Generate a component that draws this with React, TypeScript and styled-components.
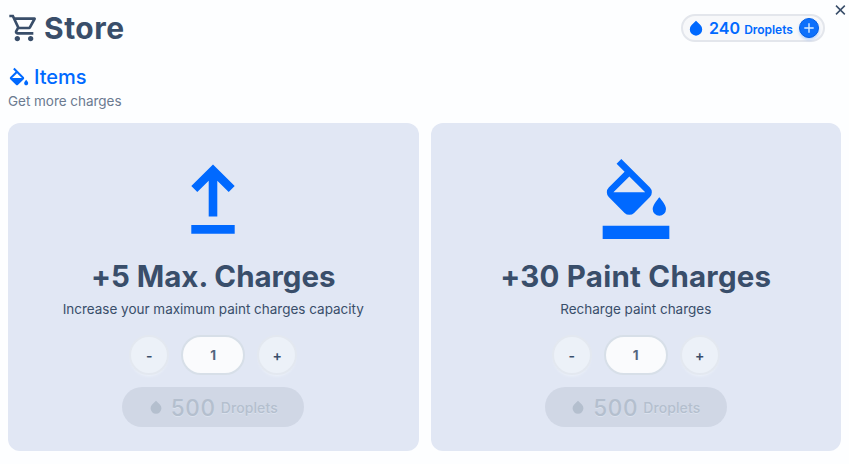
import React from "react";
import styled, { createGlobalStyle } from "styled-components";

const Global = createGlobalStyle`
  * { box-sizing: border-box; }
  body { margin: 0; background: #fdfeff; color: #394e6a; font-family: Inter, "Liberation Sans", sans-serif; }
  button, input { font-family: inherit; }
  svg { display: block; flex: none; }
`;

const Page = styled.main`
  position: relative;
  height: 464px;
  padding: 8px 8px 0;
  overflow: hidden;
`;
const Close = styled.button`
  position: absolute;
  top: 4px;
  right: 2px;
  padding: 0;
  border: 0;
  background: none;
  color: #394e6a;
`;
const Header = styled.header`
  display: flex;
  align-items: center;
  height: 40px;
  padding-right: 16px;
`;
const Title = styled.h1`
  margin: -1px auto 0 4px;
  font-size: 30px;
  line-height: 36px;
  font-weight: 700;
  letter-spacing: 0.5px;
`;
const Balance = styled.div`
  display: flex;
  align-items: center;
  width: 144px;
  height: 28px;
  padding: 0 4px 0 5px;
  border: 2px solid #e3e6ec;
  border-radius: 14px;
  background: #f7f8fa;
  color: #0069ff;
`;
const Amount = styled.span`
  margin: -1px 0 0 5px;
  font-size: 16px;
  font-weight: 600;
  letter-spacing: 0.1px;
`;
const Unit = styled.span`
  margin: 2px auto 0 4px;
  font-size: 12px;
  font-weight: 600;
  letter-spacing: -0.05px;
`;
const AddButton = styled.button`
  display: grid;
  place-items: center;
  width: 20px;
  height: 20px;
  padding: 0;
  border: 1px solid #005ee6;
  border-radius: 50%;
  background: #0d70fb;
  color: #d9ecff;
  box-shadow: 0 2px 3px #0069ff40;
`;
const SectionTitle = styled.h2`
  display: flex;
  align-items: center;
  gap: 4px;
  height: 28px;
  margin: 15px 0 0;
  color: #0069ff;
  font-size: 20px;
  font-weight: 450;
  letter-spacing: 0;
`;
const SectionNote = styled.p`
  margin: 0;
  color: #6b7a90;
  font-size: 13.5px;
  line-height: 20px;
  letter-spacing: -0.03px;
`;
const Cards = styled.section`
  display: grid;
  grid-template-columns: 1fr 1fr;
  gap: 12px;
  margin-top: 12px;
`;
const Card = styled.article`
  display: flex;
  flex-direction: column;
  align-items: center;
  height: 328px;
  padding-top: 36px;
  border-radius: 12px;
  background: #e1e7f4;
`;
const CardTitle = styled.h3<{ $tracking: number }>`
  margin: 19px 0 0;
  font-size: 29.5px;
  line-height: 36px;
  font-weight: 700;
  letter-spacing: ${(p) => p.$tracking}px;
  white-space: nowrap;
`;
const CardNote = styled.p`
  margin: 5px 0 0;
  font-size: 13.5px;
  line-height: 20px;
  letter-spacing: -0.01px;
`;
const Stepper = styled.div`
  display: flex;
  align-items: center;
  gap: 12px;
  margin-top: 16px;
`;
const StepButton = styled.button`
  width: 40px;
  height: 40px;
  padding: 0;
  border: 2px solid #e3e8f0;
  border-radius: 50%;
  background: #ecf1f8;
  color: #394e6a;
  font-size: 14px;
  font-weight: 600;
  box-shadow: 0 3px 3px -2px #edf2fa;
`;
const Quantity = styled.input`
  width: 64px;
  height: 40px;
  padding: 0;
  border: 2px solid #d7dfe8;
  border-radius: 20px;
  background: #fafbfd;
  color: #53657f;
  font-size: 13.5px;
  font-weight: 700;
  text-align: center;
`;
const Purchase = styled.button`
  display: flex;
  align-items: center;
  justify-content: center;
  width: 182px;
  height: 40px;
  margin-top: 12px;
  padding: 0;
  border: 0;
  border-radius: 20px;
  background: #d0d7e5;
  color: #b4bfce;
  text-shadow: 0 1px #dbe2ee;
`;
const Price = styled.span`
  margin: 0 5px 0 8px;
  font-size: 22.5px;
  font-weight: 500;
  letter-spacing: 0.7px;
`;
const PriceUnit = styled.span`
  font-size: 14px;
  font-weight: 500;
  letter-spacing: 0.1px;
`;

const Drop = ({ size }: { size: number }) => (
  <svg width={size} height={size} viewBox="0 0 16 16" fill="currentColor">
    <path d="M8 .8 12.4 5.1a6.2 6.2 0 1 1-8.8 0Z" />
  </svg>
);

const Upgrade = () => (
  <svg width="80" height="80" fill="#0069ff">
    <path d="M40 5.4 61.7 27 55.7 32.9 44.3 21.7V57.5H35.7V21.7L24.3 32.9 18.3 27ZM18.3 66H61.7V74.8H18.3Z" />
  </svg>
);
const Refill = () => (
  <svg width="80" height="80" viewBox="0 -960 960 960" fill="#0069ff">
    <path d="m247-904 57-56 343 343q23 23 23 57t-23 57L457-313q-23 23-57 23t-57-23L153-503q-23-23-23-57t23-57l190-191-96-96Zm153 153L209-560h382L400-751Zm360 471q-33 0-56.5-23.5T680-360q0-21 12.5-45t27.5-45q9-12 19-25t21-25q11 12 21 25t19 25q15 21 27.5 45t12.5 45q0 33-23.5 56.5T760-280ZM80 0v-160h800V0H80Z" />
  </svg>
);

const items = [
  { title: "+5 Max. Charges", note: "Increase your maximum paint charges capacity", tracking: -0.02, icon: <Upgrade /> },
  { title: "+30 Paint Charges", note: "Recharge paint charges", tracking: 0.24, icon: <Refill /> },
];

export default function App() {
  return (
    <>
      <Global />
      <Page>
        <Header>
          <svg width="32" height="32" viewBox="0 -960 960 960" fill="#394e6a">
            <path d="M280-80q-33 0-56.5-23.5T200-160q0-33 23.5-56.5T280-240q33 0 56.5 23.5T360-160q0 33-23.5 56.5T280-80Zm400 0q-33 0-56.5-23.5T600-160q0-33 23.5-56.5T680-240q33 0 56.5 23.5T760-160q0 33-23.5 56.5T680-80ZM246-720l96 200h280l110-200H246Zm-38-80h590q23 0 35 20.5t1 41.5L692-482q-11 20-29.5 31T622-440H324l-44 80h480v80H280q-45 0-68-39.5t-2-78.5l54-98-144-304H40v-80h130l38 80Z" />
          </svg>
          <Title>Store</Title>
          <Balance>
            <Drop size={16} />
            <Amount>240</Amount>
            <Unit>Droplets</Unit>
            <AddButton aria-label="Add droplets">
              <svg width="10" height="10" stroke="currentColor" strokeWidth="1.4">
                <path d="M5 .3V9.7M.3 5H9.7" />
              </svg>
            </AddButton>
          </Balance>
        </Header>
        <Close aria-label="Close">
          <svg width="13" height="12" stroke="currentColor" strokeWidth="1.5">
            <path d="M2 1.6 10.8 10.4M10.8 1.6 2 10.4" />
          </svg>
        </Close>
        <SectionTitle>
          <svg width="22" height="22" viewBox="0 -960 960 960" fill="currentColor">
            <path d="M346-140 100-386q-10-10-15-22t-5-25q0-13 5-25t15-22l230-229-106-106 62-65 400 400q10 10 14.5 22t4.5 25q0 13-4.5 25T686-386L440-140q-10 10-22 15t-25 5q-13 0-25-5t-22-15Zm47-506L179-432h428L393-646Zm399 526q-36 0-61-25.5T706-208q0-27 13.5-51t30.5-47l42-54 44 54q16 23 30 47t14 51q0 37-26 62.5T792-120Z" />
          </svg>
          Items
        </SectionTitle>
        <SectionNote>Get more charges</SectionNote>
        <Cards>
          {items.map((item) => (
            <Card key={item.title}>
              {item.icon}
              <CardTitle $tracking={item.tracking}>{item.title}</CardTitle>
              <CardNote>{item.note}</CardNote>
              <Stepper>
                <StepButton>-</StepButton>
                <Quantity defaultValue="1" aria-label="Quantity" />
                <StepButton>+</StepButton>
              </Stepper>
              <Purchase disabled>
                <Drop size={14} />
                <Price>500</Price>
                <PriceUnit>Droplets</PriceUnit>
              </Purchase>
            </Card>
          ))}
        </Cards>
      </Page>
    </>
  );
}
